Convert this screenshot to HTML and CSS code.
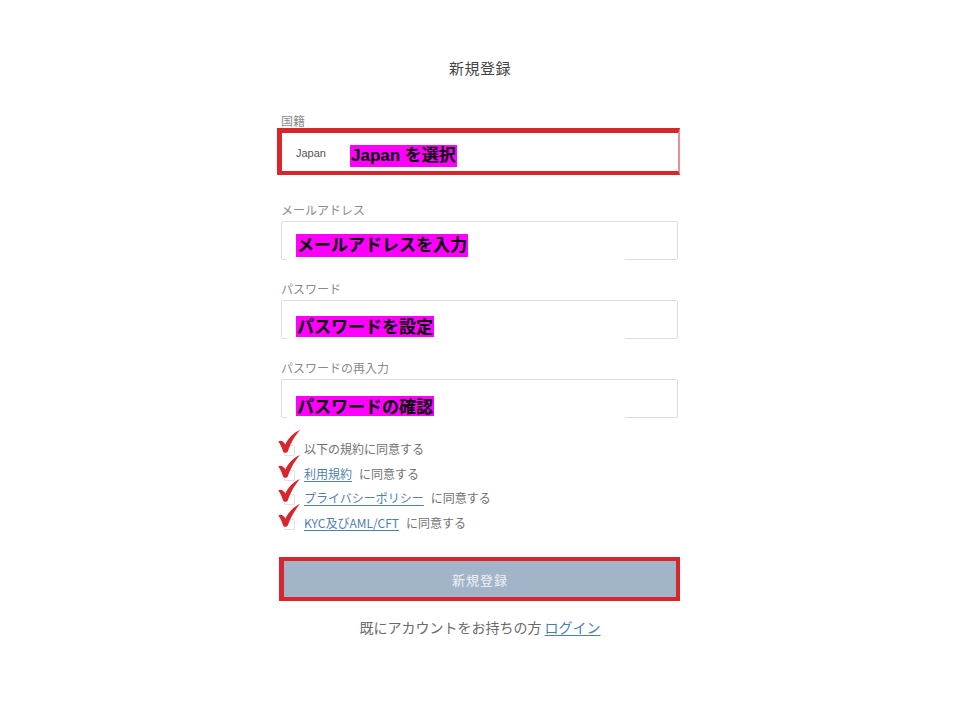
FILE: index.html
```html
<!DOCTYPE html>
<html lang="ja">
<head>
<meta charset="utf-8">
<title>新規登録</title>
<link rel="stylesheet" href="styles.css">
</head>
<body>
<main class="page">
  <h1 class="title">新規登録</h1>

  <div class="field field-country">
    <div class="label">国籍</div>
    <div class="country-box">
      <span class="country-value">Japan</span>
      <span class="tag tag-small">Japan を選択</span>
    </div>
  </div>

  <div class="field">
    <div class="label">メールアドレス</div>
    <div class="input input-first">
      <span class="tag">メールアドレスを入力</span>
      <span class="mask"></span>
    </div>
  </div>

  <div class="field">
    <div class="label">パスワード</div>
    <div class="input">
      <span class="tag">パスワードを設定</span>
      <span class="mask"></span>
    </div>
  </div>

  <div class="field field-last">
    <div class="label">パスワードの再入力</div>
    <div class="input input-last">
      <span class="tag">パスワードの確認</span>
      <span class="mask"></span>
    </div>
  </div>

  <ul class="agree-list">
    <li class="agree-row">
      <span class="box"></span>
      <svg class="check" viewBox="0 0 22 23"><path d="M0.3 11.6 C2.8 9.8 5.4 11.2 7.4 14.6 C10 8.8 14.6 3.4 21.9 0.1 C17.6 5.4 13.2 12 9.8 21.4 C9 23.1 6.1 23.3 5.2 21.7 C3.8 17.8 2.5 14.6 0.3 11.6 Z"/></svg>
      <span class="plain">以下の規約に同意する</span>
    </li>
    <li class="agree-row">
      <span class="box"></span>
      <svg class="check" viewBox="0 0 22 23"><path d="M0.3 11.6 C2.8 9.8 5.4 11.2 7.4 14.6 C10 8.8 14.6 3.4 21.9 0.1 C17.6 5.4 13.2 12 9.8 21.4 C9 23.1 6.1 23.3 5.2 21.7 C3.8 17.8 2.5 14.6 0.3 11.6 Z"/></svg>
      <a class="link" href="#">利用規約</a><span class="plain">に同意する</span>
    </li>
    <li class="agree-row">
      <span class="box"></span>
      <svg class="check" viewBox="0 0 22 23"><path d="M0.3 11.6 C2.8 9.8 5.4 11.2 7.4 14.6 C10 8.8 14.6 3.4 21.9 0.1 C17.6 5.4 13.2 12 9.8 21.4 C9 23.1 6.1 23.3 5.2 21.7 C3.8 17.8 2.5 14.6 0.3 11.6 Z"/></svg>
      <a class="link" href="#">プライバシーポリシー</a><span class="plain">に同意する</span>
    </li>
    <li class="agree-row">
      <span class="box"></span>
      <svg class="check" viewBox="0 0 22 23"><path d="M0.3 11.6 C2.8 9.8 5.4 11.2 7.4 14.6 C10 8.8 14.6 3.4 21.9 0.1 C17.6 5.4 13.2 12 9.8 21.4 C9 23.1 6.1 23.3 5.2 21.7 C3.8 17.8 2.5 14.6 0.3 11.6 Z"/></svg>
      <a class="link" href="#">KYC及びAML/CFT</a><span class="plain">に同意する</span>
    </li>
  </ul>

  <div class="submit-frame">
    <button class="submit" type="button">新規登録</button>
  </div>

  <p class="footer">既にアカウントをお持ちの方 <a class="footer-link" href="#">ログイン</a></p>
</main>
</body>
</html>
```

FILE: styles.css
```css
html, body {
  margin: 0;
  padding: 0;
  background: #ffffff;
}

body {
  font-family: "Noto Sans CJK JP", "Noto Sans", sans-serif;
  color: #555555;
}

.page {
  width: 400px;
  margin: 0 auto;
  padding-top: 58px;
}

.title {
  margin: 0;
  font-size: 15px;
  line-height: 20px;
  font-weight: 400;
  text-align: center;
  color: #444444;
  letter-spacing: 0.5px;
}

.field {
  margin-bottom: 22px;
}

.field-country {
  margin-top: 36px;
  margin-bottom: 28px;
}

.field-last {
  margin-bottom: 0;
}

.label {
  font-size: 12px;
  line-height: 14px;
  color: #8a8a8a;
  margin-left: 1px;
  margin-bottom: 4px;
}

.field-country .label {
  margin-bottom: 0;
}

.country-box {
  box-sizing: border-box;
  width: 403px;
  height: 47px;
  margin-left: -3px;
  border-style: solid;
  border-color: #d8262d;
  border-width: 5px 2px 4px 5px;
  border-right-color: #ef8f94;
  display: flex;
  padding-left: 14px;
  background: #ffffff;
}

.country-value {
  align-self: center;
  font-family: "Liberation Sans", "Noto Sans", sans-serif;
  font-size: 11px;
  color: #555555;
  margin-top: 1px;
}

.tag {
  display: inline-block;
  background: #ff00ff;
  color: #000000;
  font-family: "Liberation Sans", "Noto Sans CJK JP", sans-serif;
  font-weight: 700;
  font-size: 17px;
  line-height: 24px;
  height: 24px;
  padding: 0 1px;
}

.tag-small {
  align-self: flex-end;
  margin-bottom: 4px;
  margin-left: 24px;
  font-size: 17px;
  line-height: 22px;
  height: 22px;
}

.input {
  position: relative;
  box-sizing: border-box;
  width: 397px;
  height: 39px;
  margin-left: 1px;
  border: 1px solid #dddddd;
  border-radius: 2px;
  padding: 13px 0 0 14px;
  background: #ffffff;
}

.input-first {
  padding-top: 10px;
}

.input-last {
  padding-top: 14px;
}

.input .tag {
  height: 23px;
  line-height: 23px;
}

.mask {
  position: absolute;
  left: 5px;
  bottom: -2px;
  width: 338px;
  height: 3px;
  background: #ffffff;
}

.agree-list {
  list-style: none;
  margin: 19px 0 0;
  padding: 0;
}

.agree-row {
  position: relative;
  height: 24.5px;
  line-height: 24.5px;
  padding-left: 24px;
  font-size: 12px;
  white-space: nowrap;
}

.box {
  position: absolute;
  left: 4px;
  top: 8px;
  width: 9px;
  height: 9px;
  border: 1px solid #e2e2e2;
  border-radius: 1px;
  background: #ffffff;
}

.check {
  position: absolute;
  left: -2px;
  top: -7px;
  width: 22px;
  height: 23px;
  fill: #d7262e;
}

.plain {
  color: #707070;
}

.link {
  color: #4f7fae;
  text-decoration: underline;
  text-underline-offset: 2px;
  padding-right: 3px;
  margin-right: 4px;
}

.submit-frame {
  box-sizing: border-box;
  width: 401px;
  height: 44px;
  margin: 22px 0 0 -1px;
  border: 4px solid #d8262d;
  border-left-width: 5px;
  background: #a1b4c8;
}

.submit {
  display: block;
  width: 100%;
  height: 100%;
  border: 0;
  margin: 0;
  padding: 0;
  background: #a1b4c8;
  color: #eef2f6;
  font-family: "Noto Sans CJK JP", "Noto Sans", sans-serif;
  font-size: 13px;
  letter-spacing: 1px;
}

.footer {
  margin: 16px 0 0;
  font-size: 14px;
  line-height: 20px;
  text-align: center;
  color: #6a6a6a;
}

.footer-link {
  color: #4a7fb2;
  text-decoration: underline;
  text-underline-offset: 2px;
}
```
